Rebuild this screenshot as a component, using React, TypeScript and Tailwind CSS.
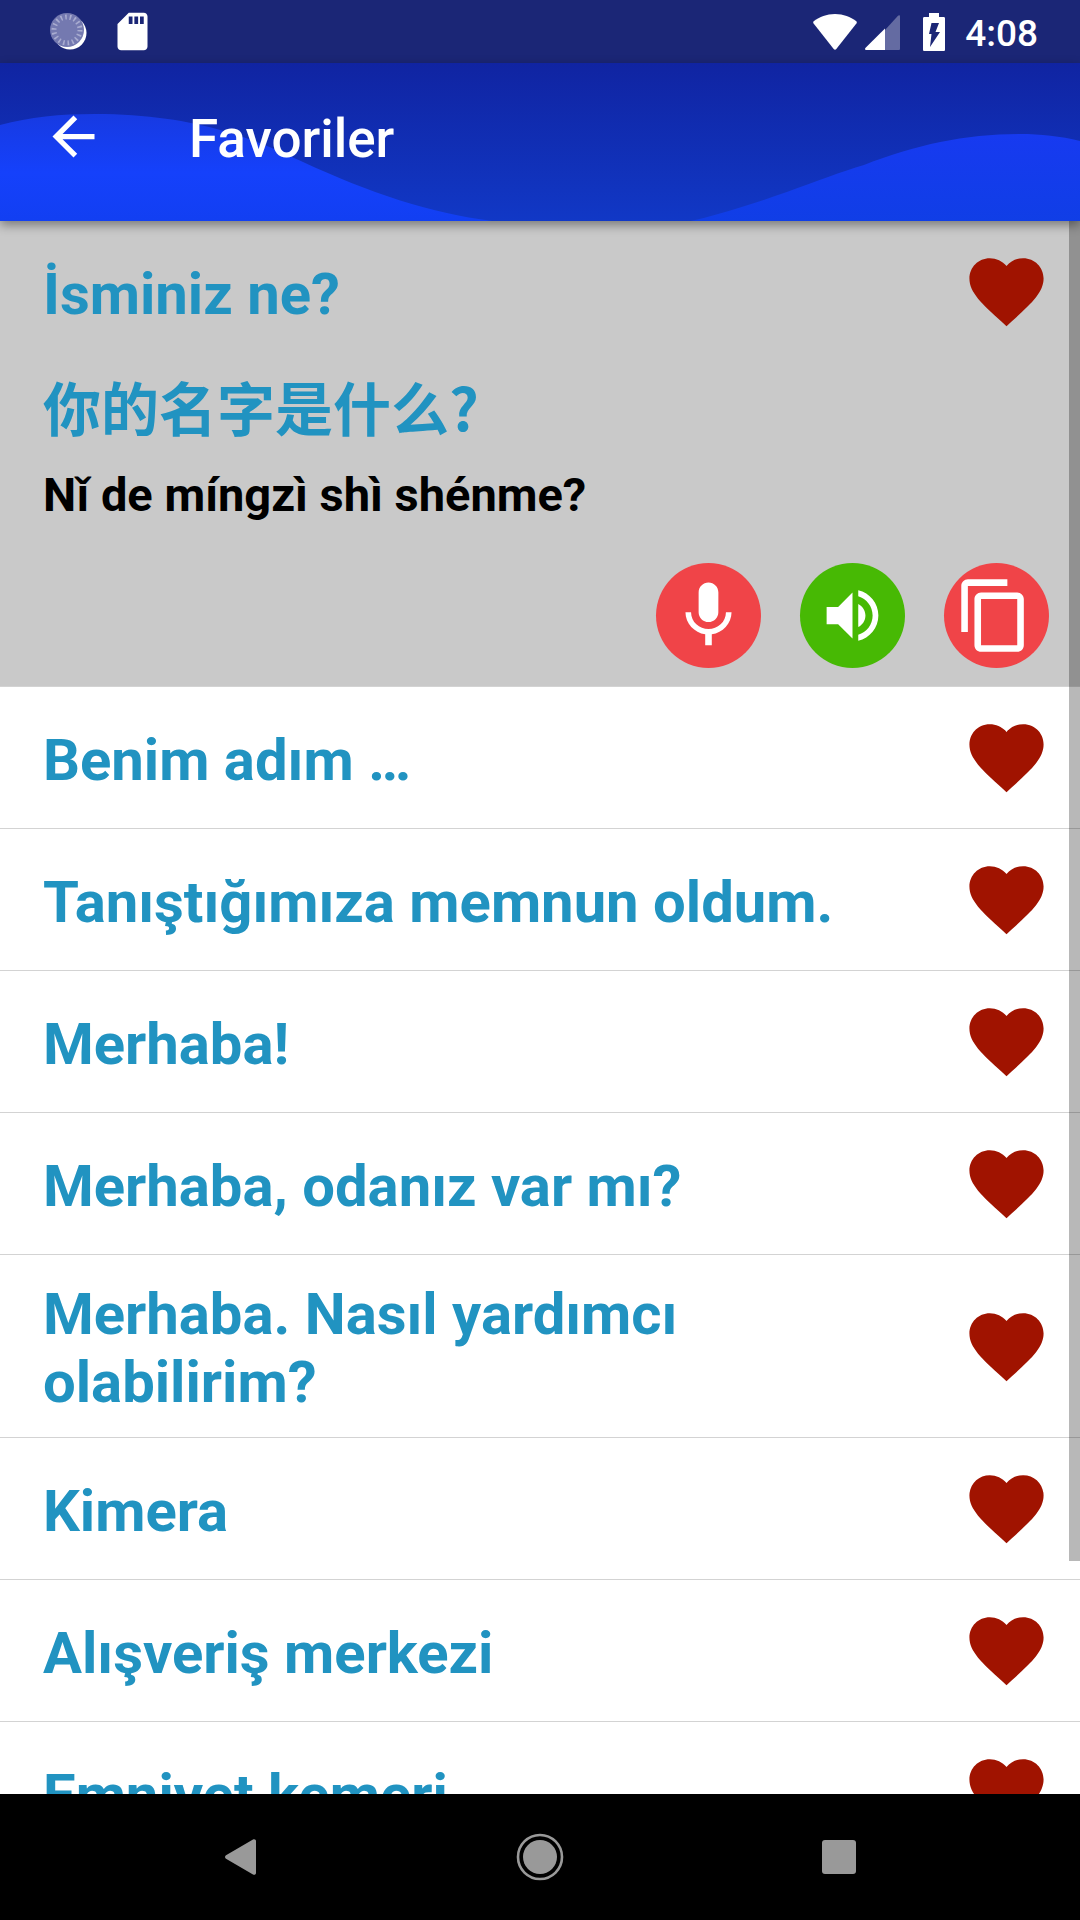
import { useState } from "react";

type Phrase = { text: string; translation?: string; reading?: string };

const phrases: Phrase[] = [
  { text: "İsminiz ne?", translation: "你的名字是什么?", reading: "Nǐ de míngzì shì shénme?" },
  { text: "Benim adım …" },
  { text: "Tanıştığımıza memnun oldum." },
  { text: "Merhaba!" },
  { text: "Merhaba, odanız var mı?" },
  { text: "Merhaba. Nasıl yardımcı olabilirim?" },
  { text: "Kimera" },
  { text: "Alışveriş merkezi" },
  { text: "Emniyet kemeri" },
];

function Glyph({ d, className }: { d: string; className: string }) {
  return (
    <svg viewBox="0 0 24 24" className={className} fill="currentColor" aria-hidden="true">
      <path d={d} />
    </svg>
  );
}

const HEART =
  "M12 21.35l-1.45-1.32C5.4 15.36 2 12.28 2 8.5 2 5.42 4.42 3 7.5 3c1.74 0 3.41.81 4.5 2.09C13.09 3.81 14.76 3 16.5 3 19.58 3 22 5.42 22 8.5c0 3.78-3.4 6.86-8.55 11.54L12 21.35z";
const MIC =
  "M12 14c1.66 0 2.99-1.34 2.99-3L15 5c0-1.66-1.34-3-3-3S9 3.34 9 5v6c0 1.66 1.34 3 3 3zm5.3-3c0 3-2.54 5.1-5.3 5.1S6.7 14 6.7 11H5c0 3.41 2.72 6.23 6 6.72V21h2v-3.28c3.28-.48 6-3.3 6-6.72h-1.7z";
const VOLUME =
  "M3 9v6h4l5 5V4L7 9H3zm13.5 3c0-1.77-1.02-3.29-2.5-4.03v8.05c1.48-.73 2.5-2.25 2.5-4.02zM14 3.23v2.06c2.89.86 5 3.54 5 6.71s-2.11 5.85-5 6.71v2.06c4.01-.91 7-4.49 7-8.77s-2.99-7.86-7-8.77z";
const COPY =
  "M15.3 1H3.300c-1.100 0-2 .9-2 2v14h2V3h12V1zm3 4H7.300c-1.100 0-2 .9-2 2v14c0 1.100.9 2 2 2h11c1.100 0 2-.9 2-2V7c0-1.100-.9-2-2-2zm0 16H7.300V7h11v14z";
const ARROW = "M20 11H7.83l5.59-5.59L12 4l-8 8 8 8 1.41-1.41L7.83 13H20v-2z";
const SD_CARD =
  "M18 2h-8L4 8v12c0 1.1.9 2 2 2h12c1.1 0 2-.9 2-2V4c0-1.1-.9-2-2-2zm-6 6h-2V4h2v4zm3 0h-2V4h2v4zm3 0h-2V4h2v4z";

function StatusBar() {
  return (
    <div className="flex h-[63px] shrink-0 items-center justify-between bg-[#1b2676] pr-[42px] pl-[50px] text-white">
      <div className="flex items-center gap-[22px]">
        <svg viewBox="0 0 38 38" className="size-[38px]" aria-hidden="true">
          <circle cx="20" cy="20" r="16.500" fill="#fff" />
          <circle cx="17" cy="17" r="17" fill="#7479b0" />
          <circle cx="17" cy="17" r="13" fill="none" stroke="#a9acd0" strokeWidth="5" strokeDasharray="1.6 2.940" />
        </svg>
        <Glyph d={SD_CARD} className="size-[45px]" />
      </div>
      <div className="flex items-center">
        <svg viewBox="0 0 44 38" className="h-[38px] w-[44px]" fill="currentColor" aria-hidden="true">
          <path d="M22 1C13.500 1 6.500 4 1 8c-1 .8-1 1.600-.4 2.500L20.700 36c.8 1 1.800 1 2.600 0L43.400 10.500c.6-.9.600-1.700-.4-2.500C37.500 4 30.500 1 22 1z" />
        </svg>
        <svg viewBox="0 0 36 38" className="ml-2 h-[38px] w-[36px]" fill="currentColor" aria-hidden="true">
          <path d="M20 17v20h13.500c1 0 1.500-.5 1.500-1.500V3.500c0-1.300-1-1.600-2-.7z" opacity=".32" />
          <path d="M20 15.500V37H1.500C0 37-.4 35.800.6 34.800z" />
        </svg>
        <svg viewBox="0 0 22 38" className="ml-[22px] h-[38px] w-[22px]" aria-hidden="true">
          <path d="M6 0h10v4h4.500c1 0 1.500.500 1.500 1.500v31c0 1-.5 1.500-1.500 1.500h-19C.5 38 0 37.500 0 36.500v-31C0 4.500.5 4 1.500 4H6z" fill="#fff" />
          <path d="M8.500 10h7.500l-3.500 9h4.500L7 34l1.500-13H6z" fill="#1b2676" />
        </svg>
        <span className="pt-1 pl-5 text-[37px] leading-none font-medium">4:08</span>
      </div>
    </div>
  );
}

function Header() {
  return (
    <header className="relative z-10 shrink-0 bg-linear-to-b from-[#1024a2] to-[#1138c6] pb-[11px] text-white shadow-[0_4px_10px_rgba(0,0,0,0.4)]">
      <svg viewBox="0 0 1080 158" preserveAspectRatio="none" className="absolute inset-0 size-full" aria-hidden="true">
        <defs>
          <linearGradient id="waveLeft" x1="0" y1="0" x2="0" y2="1">
            <stop offset="0" stopColor="#173ae2" />
            <stop offset=".55" stopColor="#1541fb" />
            <stop offset="1" stopColor="#123ff2" />
          </linearGradient>
          <linearGradient id="waveRight" x1="0" y1="0" x2="0" y2="1">
            <stop offset="0" stopColor="#173af0" />
            <stop offset="1" stopColor="#103ee6" />
          </linearGradient>
        </defs>
        <path d="M0 62C30 54 60 51 95 51C200 51 260 79 303 99C370 130 430 150 492 158H0z" fill="url(#waveLeft)" />
        <path d="M691 158C760 142 820 115 864 102C915 82 965 71 1019 71C1040 71 1060 73 1080 78V158z" fill="url(#waveRight)" />
      </svg>
      <div className="relative flex h-[147px] items-center gap-[84px] pl-[42px]">
        <button type="button" aria-label="Geri">
          <Glyph d={ARROW} className="size-[63px]" />
        </button>
        <h1 className="pt-1.5 text-[53px] leading-none font-medium">Favoriler</h1>
      </div>
    </header>
  );
}

function RoundButton({ label, icon, className, iconClass }: { label: string; icon: string; className: string; iconClass: string }) {
  return (
    <button type="button" aria-label={label} className={`flex size-[105px] items-center justify-center rounded-full text-white ${className}`}>
      <Glyph d={icon} className={iconClass} />
    </button>
  );
}

function PhraseItem({ phrase, open, onToggle }: { phrase: Phrase; open: boolean; onToggle: () => void }) {
  const expanded = open && phrase.translation;
  return (
    <li className={`border-b border-[#d3d3d3] ${expanded ? "bg-[#c9c9c9]" : "bg-white"}`}>
      <div className="flex min-h-[141px] items-center pr-[29px] pl-[43px]">
        <button
          type="button"
          onClick={onToggle}
          className="flex-1 pt-[25px] pr-4 pb-[21px] text-left text-[58px] leading-[68px] font-bold text-[#2193c1]"
        >
          {phrase.text}
        </button>
        <button type="button" aria-label="Favorilerden çıkar" className="text-[#a01300]">
          <Glyph d={HEART} className="size-[89px]" />
        </button>
      </div>
      {expanded && (
        <div className="pb-[18px]">
          <div className="px-[43px]">
            <p lang="zh" className="font-['Noto_Sans_CJK_SC',sans-serif] text-[58px] leading-[88px] font-bold text-[#2193c1]">
              {phrase.translation}
            </p>
            <p className="pt-[17px] text-[47px] leading-[56px] font-bold text-black">{phrase.reading}</p>
          </div>
          <div className="flex justify-end gap-[39px] pt-10 pr-[31px]">
            <RoundButton label="Kaydet" icon={MIC} className="bg-[#f04448]" iconClass="size-[79px]" />
            <RoundButton label="Dinle" icon={VOLUME} className="bg-[#47b904]" iconClass="size-[69px]" />
            <RoundButton label="Kopyala" icon={COPY} className="bg-[#f04448]" iconClass="size-[79px]" />
          </div>
        </div>
      )}
    </li>
  );
}

function NavBar() {
  return (
    <nav className="flex h-[126px] shrink-0 items-center justify-evenly bg-black text-[#999999]">
      <button type="button" aria-label="Geri" className="flex w-[116px] justify-center">
        <svg viewBox="0 0 32 36" className="h-9 w-8" fill="currentColor" aria-hidden="true">
          <path d="M1 16.200L28 .5c1.500-.8 3 0 3 1.500v32c0 1.500-1.500 2.300-3 1.500L1 19.800c-1.300-.9-1.300-2.700 0-3.600z" />
        </svg>
      </button>
      <button type="button" aria-label="Ana ekran" className="flex w-[116px] justify-center">
        <svg viewBox="0 0 48 48" className="size-12" fill="currentColor" aria-hidden="true">
          <circle cx="24" cy="24" r="17" />
          <circle cx="24" cy="24" r="22" fill="none" stroke="currentColor" strokeWidth="2.600" />
        </svg>
      </button>
      <button type="button" aria-label="Son uygulamalar" className="flex w-[116px] justify-center">
        <span className="size-[34px] rounded-[3px] bg-[#999999]" />
      </button>
    </nav>
  );
}

export default function App() {
  const [openIndex, setOpenIndex] = useState(0);
  return (
    <div className="flex h-screen flex-col overflow-hidden bg-white font-[Roboto,sans-serif]">
      <StatusBar />
      <Header />
      <main className="relative min-h-0 flex-1">
        <ul className="h-full overflow-y-auto [scrollbar-width:none]">
          {phrases.map((phrase, i) => (
            <PhraseItem key={phrase.text} phrase={phrase} open={openIndex === i} onToggle={() => setOpenIndex(i)} />
          ))}
        </ul>
        <div className="pointer-events-none absolute top-0 right-0 h-[85.2%] w-[11px] bg-black/28" />
      </main>
      <NavBar />
    </div>
  );
}
